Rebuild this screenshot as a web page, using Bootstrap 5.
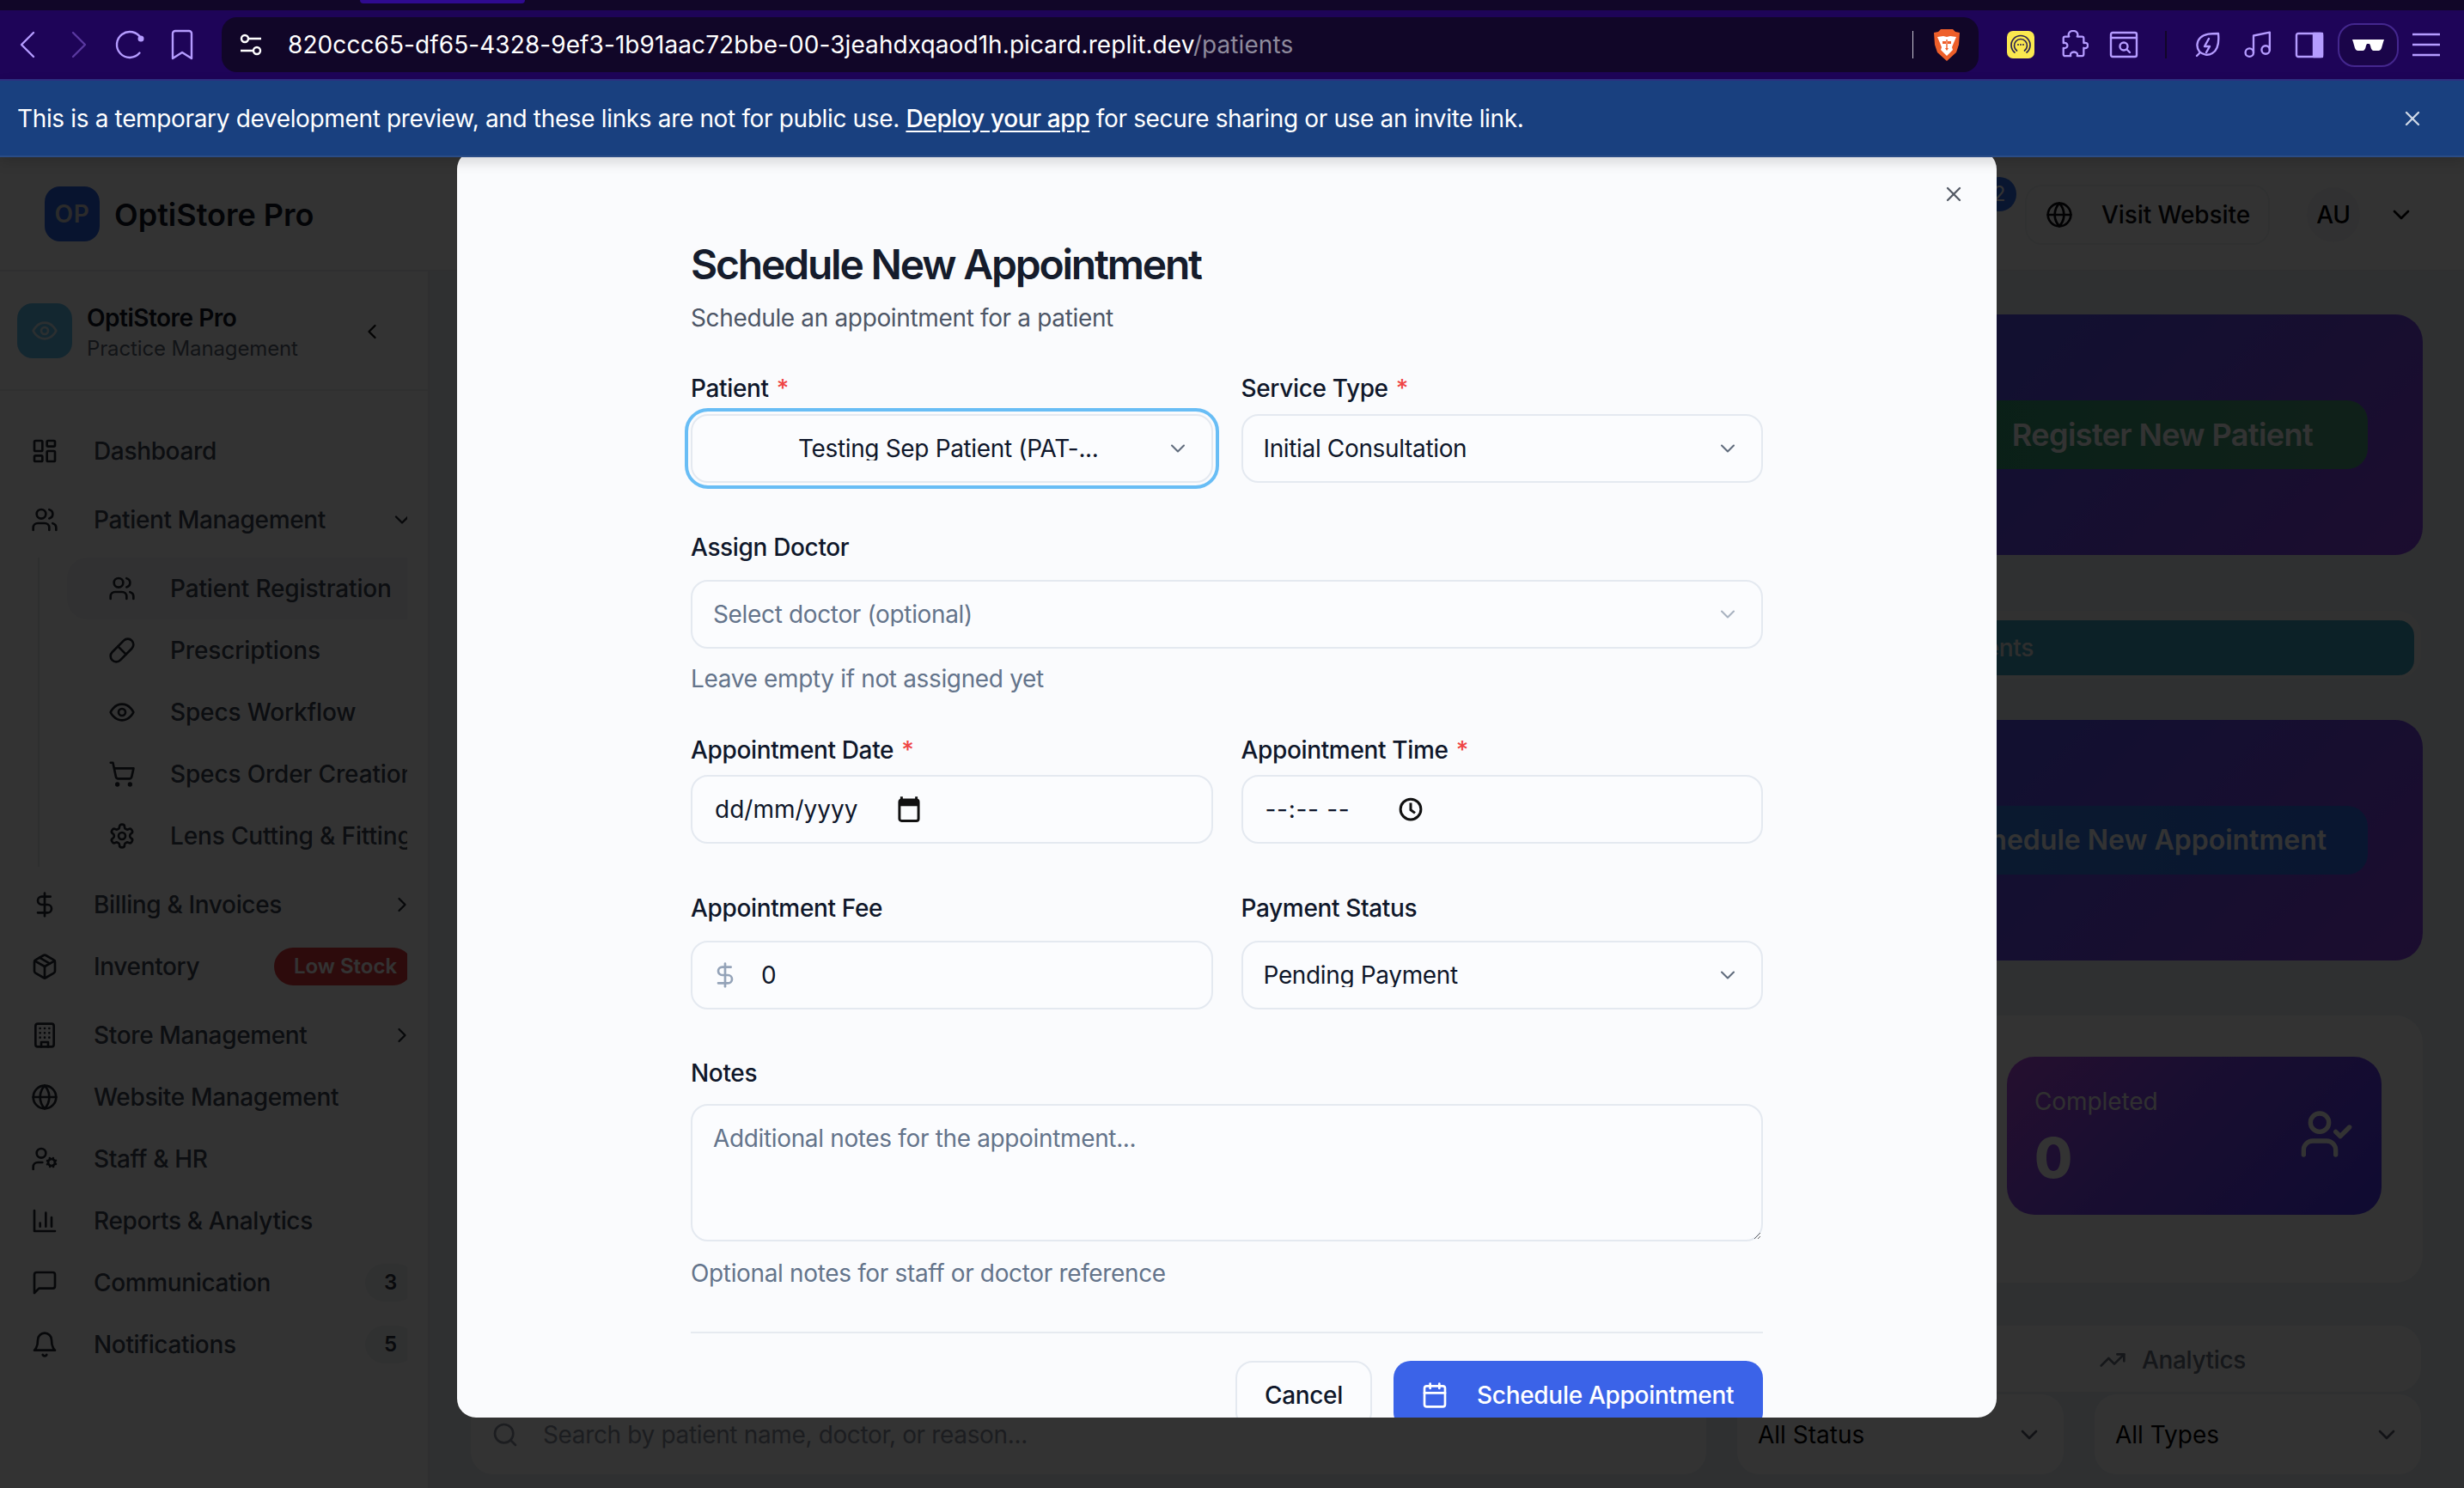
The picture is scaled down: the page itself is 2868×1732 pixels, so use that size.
<!DOCTYPE html>
<html lang="en">
<head>
<meta charset="utf-8">
<title>Schedule New Appointment</title>
<link href="https://cdn.jsdelivr.net/npm/bootstrap@5.3.0/dist/css/bootstrap.min.css" rel="stylesheet">
<style>
html,body{width:2868px;height:1732px;overflow:hidden;margin:0}
body{font-family:Inter,"Liberation Sans",sans-serif;font-size:28px;line-height:28px;letter-spacing:-.35px;color:#374151;background:#fff}
.ic{width:32px;height:32px;fill:none;stroke:currentColor;stroke-width:2;stroke-linecap:round;stroke-linejoin:round;flex:none}
.ic-28{width:28px;height:28px}
/* browser chrome */
.tabstrip{height:12px;background:#110628}
.tabnub{width:192px;height:4px;margin-left:419px;background:#2f0a8f;border-radius:0 0 6px 6px}
.toolbar{height:80px;background:#1e0458;color:#b59cff}
.tb-ic{flex:none;fill:none;stroke:#b59cff;stroke-width:2.4;stroke-linejoin:round;stroke-linecap:round}
.tb-back{width:20px;height:32px;margin-left:22px}
.tb-fwd{width:20px;height:32px;margin-left:40px;stroke:#59389f}
.tb-rel{width:34px;height:36px;margin-left:32px}
.tb-mark{width:28px;height:36px;margin-left:30px}
.urlbar{width:2045px;height:64px;margin-left:32px;background:#110628;border-radius:18px;padding-left:20px;color:#fff}
.site-ic{width:28px;height:28px;flex:none;fill:none;stroke:#fff;stroke-width:2.4}
.url-host{font-size:28px;margin-left:29px;letter-spacing:.08px;white-space:nowrap}
.url-path{color:#8e8a9c}
.url-sep{width:1px;height:32px;background:#c9c6d3;margin-left:auto}
.lion{margin:0 21px 0 23px;width:32px;height:37px;flex:none}
.ext-a{margin-left:33px;width:32px;height:32px;flex:none}
.ext-puz{width:34px;height:34px;margin-left:29px}
.ext-srch{width:34px;height:32px;margin-left:24px}
.tb-div{width:2px;height:32px;background:#110628;flex:none;margin-left:31px}
.ext-bolt{width:30px;height:30px;margin-left:32px}
.ext-music{width:33px;height:33px;margin-left:28px}
.ext-side{width:34px;height:31px;margin-left:26px}
.glass-btn{width:71px;height:51px;border:2px solid #44278e;border-radius:20px;background:#1a0549;flex:none;margin-left:16px}
.glass-ic{width:37px;height:13px}
.ext-menu{width:32px;height:30px;margin-left:16px;stroke-width:2.6;stroke-linecap:butt}
.banner{height:91px;background:#19407f;color:#fff;border-top:2px solid #2c2f80;border-bottom:2px solid #2a4c86;padding:0 46px 0 20px;position:relative;z-index:5;box-shadow:0 6px 14px rgba(0,0,0,.14)}
.banner a{color:#fff;font-weight:500;text-underline-offset:4px}
.banner .ic{color:#cfd8e6}
/* app behind the dialog */
.shell{height:1549px;position:relative;overflow:hidden}
.app-head{height:133px;border-bottom:2px solid #e8eaee;background:#fff;padding:3px 0 0 52px}
.logo-sq{width:64px;height:64px;border-radius:18px;background:#2a63e8;color:#d7d7d7;font-weight:600;font-size:28px;letter-spacing:.6px;margin-top:-3px}
.app-name{font-size:36px;line-height:40px;font-weight:600;color:#111827;margin-left:17px;letter-spacing:0}
.head-right{margin-left:auto;position:relative;padding-right:57px}
.count-dot{position:absolute;left:-50px;top:-9px;width:40px;height:40px;border-radius:50%;background:#2e6ef0;color:#fff;font-size:24px}
.visit{width:285px;height:70px;border:2px solid #f1f3f5;border-radius:20px;color:#0b0b0f;font-weight:500;background:#fff;padding-left:22px;gap:33px;letter-spacing:-.1px}
.avatar{width:62px;height:64px;border-radius:50%;background:#f5f6f8;color:#000;margin-left:43px;font-weight:500}
.head-chev{margin-left:32px;color:#000}
.app-body{height:1416px}
.side{width:500px;flex:none;border-right:2px solid #e9ebee;background:#fff;overflow:hidden}
.side-brand{height:139px;border-bottom:2px solid #eceef1;padding:0 0 0 20px}
.eye-sq{width:64px;height:64px;border-radius:18px;background:#62c0ee;color:#d8e8f0;margin-right:17px}
.brand-txt{padding-top:6px}
.brand-a{font-size:28px;line-height:36px;font-weight:600;color:#111827;letter-spacing:-.5px}
.brand-b{font-size:24px;line-height:36px;color:#5d6675;letter-spacing:-.13px}
.side-chev{margin:2px 51px 0 auto;color:#111}
.side-nav{width:474px;overflow:hidden;padding-top:34px}
.side-row{height:72px;display:flex;align-items:center;padding-left:36px;color:#3f4654;font-weight:500;white-space:nowrap}
.side-row .ic{color:#252a33}
.side-row .lbl{margin-left:41px}
.side-end{margin-left:auto;margin-right:-8px;color:#1f2430}
.gap-t{margin-top:8px}
.sub-group{margin-left:44px;border-left:2px solid #e6e8ec;padding-left:32px}
.sub-row{height:72px;display:flex;align-items:center;padding-left:48px;color:#3f4654;font-weight:500;white-space:nowrap;border-radius:24px 0 0 24px;letter-spacing:-.15px}
.sub-row .lbl{margin-left:40px}
.sub-row .ic{color:#252a33}
.sub-on{background:#f5f6f8}
.pill-red{margin-left:auto;margin-right:-6px;height:44px;width:161px;border-radius:22px;background:#e23b3f;color:#fff;font-size:24px;font-weight:600;padding-left:23px;line-height:44px;letter-spacing:0}
.pill-gray{margin-left:auto;margin-right:-10px;height:44px;width:59px;border-radius:22px;background:#f1f3f5;color:#2f3540;font-size:24px;font-weight:600;line-height:44px;padding-left:22px}
.main-area{flex:1;min-width:0;background:#e9f1f6;padding:50px 48px 0;overflow:hidden}
.hero{height:280px;border-radius:32px;background:linear-gradient(135deg,#5a5ef0 0%,#5a50f0 72%,#8a3fe8 100%);padding-right:64px}
.hero-btn{height:80px;width:1100px;border-radius:24px;color:#fff;font-size:36px;font-weight:600;line-height:80px;letter-spacing:-.6px}
.bg-green{background:linear-gradient(90deg,#0f9a6a,#4ea07e);text-align:right;padding-right:64px}
.bg-blue{background:linear-gradient(90deg,#4196dc,#2d6ef0);text-align:right;padding-right:48px;font-size:32px;letter-spacing:0}
.tab-wrap{height:79px;margin-top:65px;margin-right:2px;padding:11px 8px 4px;background:#f6f4f2;border-radius:28px}
.tab-on{height:64px;border-radius:18px;background:#3fa6c2;color:#e6e6e6;line-height:64px;text-align:right;padding-right:443px;font-weight:500}
.mt-48{margin-top:48px}
.stat-panel{height:311px;margin-top:64px;padding:48px;background:#fff;border-radius:32px}
.stat-card{width:436px;height:184px;border-radius:32px;background:linear-gradient(135deg,#b84ceb,#7d45ee 40%,#4c38f5);color:#fff;padding:34px 32px}
.stat-lbl{font-size:28px;line-height:36px;color:#eee;letter-spacing:-.1px}
.stat-num{font-size:64px;line-height:64px;font-weight:800;margin-top:16px;color:#fff;letter-spacing:0}
.stat-ic{width:64px;height:64px;margin-top:24px;color:#fff}
.tabs-row{height:77px;margin-top:50px;margin-right:2px;background:#fff;border-radius:28px;padding:3px 204px 0 0;color:#6b7280;font-weight:500;gap:18px}
.filter-row{height:93px;margin-top:3px;gap:36px;margin-right:2px}
.fbox{height:93px;background:#fff;border-radius:26px;color:#000;padding:0 24px}
.f-search{flex:1;color:#8a919e;gap:28px}
.f-sel{width:380px;justify-content:space-between;letter-spacing:0}
.f-sel .ic{color:#5b6270}
/* overlay + dialog */
.dim{position:absolute;inset:0;background:rgba(0,0,0,.8);z-index:2}
.dlg{position:absolute;left:532px;top:-8px;width:1792px;height:1475px;z-index:3;background:#fafbfd;border:0;border-radius:22px;overflow:hidden;display:block;padding:0 272px;color:#0f172a}
.dlg-x{position:absolute;right:36px;top:37px;color:#555b66;background:none;border:0;padding:0;line-height:0}
.dlg-title{font-size:48px;line-height:48px;font-weight:600;letter-spacing:-2.2px;color:#151c2c;margin:0;padding-top:109px}
.dlg-sub{font-size:28px;line-height:40px;color:#4d5666;margin:18px 0 0}
.f-label{display:block;font-weight:500;line-height:28px;color:#0f172a;margin:0 0 16px}
.f-label.wide{margin-bottom:24px}
.req{color:#ef4444;margin-left:2px}
.blk-patient{margin-top:48px}
.gut{--bs-gutter-x:33px;--bs-gutter-y:0}
.f-ctl{height:80px;border:2px solid #e4e9f0;border-radius:20px;background-color:#fbfcfe;font-size:28px;line-height:28px;letter-spacing:-.35px;color:#0f172a;padding:0 60px 0 24px;box-shadow:none}
select.f-ctl{background-image:url("data:image/svg+xml,%3csvg xmlns='http://www.w3.org/2000/svg' viewBox='0 0 24 24' fill='none' stroke='%235f6b7c' stroke-width='1.8' stroke-linecap='round' stroke-linejoin='round'%3e%3cpath d='m6 9 6 6 6-6'/%3e%3c/svg%3e");background-size:28px 28px;background-position:right 25px center;background-repeat:no-repeat}
.f-focus{outline:4px solid #68bdf5;outline-offset:3px;padding-left:123px}
.f-ph{color:#64748b}
.ph-chev{background-image:url("data:image/svg+xml,%3csvg xmlns='http://www.w3.org/2000/svg' viewBox='0 0 24 24' fill='none' stroke='%23a8b2c0' stroke-width='1.8' stroke-linecap='round' stroke-linejoin='round'%3e%3cpath d='m6 9 6 6 6-6'/%3e%3c/svg%3e")!important}
.f-help{color:#64748b;line-height:28px;margin:21px 0 0}
.blk-doc{margin-top:61px}
.blk-date{margin-top:55px}
.blk-fee{margin-top:61px}
.blk-notes{margin-top:60px}
.blk-notes .f-label{margin-bottom:22px}
.blk-notes .f-help{margin-top:23px}
.date-lbl{margin-bottom:15px}
.fake-ctl{display:flex;align-items:center;padding-left:26px;color:#0f172a}
.date-txt{width:199px;white-space:nowrap;letter-spacing:0}
.time-txt{width:142px;white-space:nowrap;letter-spacing:.7px}
.date-ic{width:30px;height:32px;margin-left:12px;color:#111}
.fee-sign{color:#94a3b8;width:32px;margin-left:-4px;flex:none}
.fee-val{margin-left:26px;border:0;background:none;padding:0;color:#0f172a;width:300px;font-size:28px;outline:0}
.f-area{height:160px;padding:24px 24px;resize:vertical;display:block;width:100%}
.f-area::placeholder{color:#64748b;opacity:1}
.dlg-foot{margin-top:54px;border-top:2px solid #e6eaf0;padding:32px 0 0;justify-content:flex-end;gap:25px}
.btn-c{height:80px;border:2px solid #e4e9f0;border-radius:20px;background:#fbfcfe;color:#0f172a;font-size:28px;font-weight:500;width:159px;padding:0;line-height:28px;letter-spacing:-.35px}
.btn-p{height:80px;width:430px;border:0;border-radius:20px;background:#3b63e8;color:#fff;font-size:28px;font-weight:500;line-height:28px;letter-spacing:-.3px;padding:0 0 0 32px;gap:33px;justify-content:flex-start}
.btn-p:hover,.btn-c:hover{background-color:inherit}
</style>
</head>
<body>
<svg width="0" height="0" class="position-absolute" aria-hidden="true">
<defs>
<symbol id="i-dash" viewBox="0 0 24 24"><rect x="3" y="3" width="7" height="9" rx="1"/><rect x="14" y="3" width="7" height="5" rx="1"/><rect x="14" y="12" width="7" height="9" rx="1"/><rect x="3" y="16" width="7" height="5" rx="1"/></symbol>
<symbol id="i-users" viewBox="0 0 24 24"><path d="M16 21v-2a4 4 0 0 0-4-4H6a4 4 0 0 0-4 4v2"/><circle cx="9" cy="7" r="4"/><path d="M22 21v-2a4 4 0 0 0-3-3.87"/><path d="M16 3.13a4 4 0 0 1 0 7.75"/></symbol>
<symbol id="i-pill" viewBox="0 0 24 24"><path d="m10.5 20.5 10-10a4.95 4.95 0 1 0-7-7l-10 10a4.95 4.95 0 1 0 7 7Z"/><path d="m8.5 8.5 7 7"/></symbol>
<symbol id="i-eye" viewBox="0 0 24 24"><path d="M2 12s3-7 10-7 10 7 10 7-3 7-10 7-10-7-10-7Z"/><circle cx="12" cy="12" r="3"/></symbol>
<symbol id="i-cart" viewBox="0 0 24 24"><circle cx="8" cy="21" r="1"/><circle cx="19" cy="21" r="1"/><path d="M2.05 2.05h2l2.66 12.42a2 2 0 0 0 2 1.58h9.78a2 2 0 0 0 1.95-1.57l1.65-7.43H5.12"/></symbol>
<symbol id="i-gear" viewBox="0 0 24 24"><path d="M12.22 2h-.44a2 2 0 0 0-2 2v.18a2 2 0 0 1-1 1.73l-.43.25a2 2 0 0 1-2 0l-.15-.08a2 2 0 0 0-2.73.73l-.22.38a2 2 0 0 0 .73 2.73l.15.1a2 2 0 0 1 1 1.72v.51a2 2 0 0 1-1 1.74l-.15.09a2 2 0 0 0-.73 2.73l.22.38a2 2 0 0 0 2.73.73l.15-.08a2 2 0 0 1 2 0l.43.25a2 2 0 0 1 1 1.73V20a2 2 0 0 0 2 2h.44a2 2 0 0 0 2-2v-.18a2 2 0 0 1 1-1.73l.43-.25a2 2 0 0 1 2 0l.15.08a2 2 0 0 0 2.73-.73l.22-.39a2 2 0 0 0-.73-2.73l-.15-.08a2 2 0 0 1-1-1.74v-.5a2 2 0 0 1 1-1.74l.15-.09a2 2 0 0 0 .73-2.73l-.22-.38a2 2 0 0 0-2.73-.73l-.15.08a2 2 0 0 1-2 0l-.43-.25a2 2 0 0 1-1-1.73V4a2 2 0 0 0-2-2z"/><circle cx="12" cy="12" r="3"/></symbol>
<symbol id="i-dollar" viewBox="0 0 24 24"><path d="M12 2v20"/><path d="M17 5H9.5a3.5 3.5 0 0 0 0 7h5a3.5 3.5 0 0 1 0 7H6"/></symbol>
<symbol id="i-box" viewBox="0 0 24 24"><path d="m7.5 4.27 9 5.15"/><path d="M21 8a2 2 0 0 0-1-1.73l-7-4a2 2 0 0 0-2 0l-7 4A2 2 0 0 0 3 8v8a2 2 0 0 0 1 1.73l7 4a2 2 0 0 0 2 0l7-4A2 2 0 0 0 21 16Z"/><path d="m3.3 7 8.7 5 8.7-5"/><path d="M12 22V12"/></symbol>
<symbol id="i-building" viewBox="0 0 24 24"><rect x="4" y="2" width="16" height="20" rx="2"/><path d="M9 22v-4h6v4"/><path d="M8 6h.01M16 6h.01M12 6h.01M12 10h.01M12 14h.01M16 10h.01M16 14h.01M8 10h.01M8 14h.01"/></symbol>
<symbol id="i-globe" viewBox="0 0 24 24"><circle cx="12" cy="12" r="10"/><path d="M12 2a14.5 14.5 0 0 0 0 20 14.5 14.5 0 0 0 0-20"/><path d="M2 12h20"/></symbol>
<symbol id="i-usercog" viewBox="0 0 24 24"><circle cx="18" cy="15" r="3"/><circle cx="9" cy="7" r="4"/><path d="M10 15H6a4 4 0 0 0-4 4v2"/><path d="m21.7 16.4-.9-.3M15.2 13.9l-.9-.3M16.6 18.7l.3-.9M19.1 12.2l.3-.9M19.6 18.7l-.4-1M16.8 12.3l-.4-1M14.3 16.6l1-.4M20.7 13.8l1-.4"/></symbol>
<symbol id="i-chart" viewBox="0 0 24 24"><path d="M3 3v18h18"/><path d="M18 17V9"/><path d="M13 17V5"/><path d="M8 17v-3"/></symbol>
<symbol id="i-msg" viewBox="0 0 24 24"><path d="M21 15a2 2 0 0 1-2 2H7l-4 4V5a2 2 0 0 1 2-2h14a2 2 0 0 1 2 2z"/></symbol>
<symbol id="i-bell" viewBox="0 0 24 24"><path d="M6 8a6 6 0 0 1 12 0c0 7 3 9 3 9H3s3-2 3-9"/><path d="M10.3 21a1.94 1.94 0 0 0 3.4 0"/></symbol>
<symbol id="i-left" viewBox="0 0 24 24"><path d="m15 18-6-6 6-6"/></symbol>
<symbol id="i-right" viewBox="0 0 24 24"><path d="m9 18 6-6-6-6"/></symbol>
<symbol id="i-down" viewBox="0 0 24 24"><path d="m6 9 6 6 6-6"/></symbol>
<symbol id="i-x" viewBox="0 0 24 24"><path d="M18 6 6 18"/><path d="m6 6 12 12"/></symbol>
<symbol id="i-cal" viewBox="0 0 24 24"><path d="M8 2v4"/><path d="M16 2v4"/><rect x="3" y="4" width="18" height="18" rx="2"/><path d="M3 10h18"/></symbol>
<symbol id="i-ucheck" viewBox="0 0 24 24"><path d="M16 21v-2a4 4 0 0 0-4-4H6a4 4 0 0 0-4 4v2"/><circle cx="9" cy="7" r="4"/><path d="m16 11 2 2 4-4"/></symbol>
<symbol id="i-trend" viewBox="0 0 24 24"><path d="m22 7-8.5 8.5-5-5L2 17"/><path d="M16 7h6v6"/></symbol>
<symbol id="i-search" viewBox="0 0 24 24"><circle cx="11" cy="11" r="8"/><path d="m21 21-4.3-4.3"/></symbol>
</defs>
</svg>

<div class="tabstrip"><div class="tabnub"></div></div>
<div class="toolbar d-flex align-items-center">
  <svg class="tb-ic tb-back" viewBox="0 0 20 32"><path d="M17 2 3 16l14 14"/></svg>
  <svg class="tb-ic tb-fwd" viewBox="0 0 20 32"><path d="m3 2 14 14L3 30"/></svg>
  <svg class="tb-ic tb-rel" viewBox="0 0 34 36"><path d="M30 10.500A15 15 0 1 0 28.500 27.600"/><circle cx="30" cy="11" r="3.500" fill="#b59cff" stroke="none"/></svg>
  <svg class="tb-ic tb-mark" viewBox="0 0 28 36"><path d="M3 5a3 3 0 0 1 3-3h16a3 3 0 0 1 3 3v29l-11-7-11 7z"/></svg>
  <div class="urlbar d-flex align-items-center">
    <svg class="site-ic" viewBox="0 0 28 28"><circle cx="7" cy="7" r="4"/><path d="M11 7h15M2 21h15"/><circle cx="21" cy="21" r="4"/></svg>
    <span class="url-host">820ccc65-df65-4328-9ef3-1b91aac72bbe-00-3jeahdxqaod1h.picard.replit.dev<span class="url-path">/patients</span></span>
    <span class="url-sep"></span>
    <svg class="lion" viewBox="0 0 32 37"><path d="M9 0h14l3 3 5 1-1 14-3 9-11 10-11-10-3-9L1 4l5-1z" fill="#ee5f2a"/><path d="M5 9l7-1 4 1 4-1 7 1-3 7-2 5 1 3-7 7-7-7 1-3-2-5z" fill="#fff"/><path d="M11 14h4v3h-4zM17 14h4v3h-4zM14 22h4l-2 3zM15.300 12h1.400v12h-1.400z" fill="#ee5f2a"/></svg>
  </div>
  <svg class="ext-a" viewBox="0 0 32 32"><rect width="32" height="32" rx="7" fill="#fbe84f"/><path d="M9 25a11 11 0 1 1 14 0M11.500 23a7.500 7.500 0 1 1 9 0" fill="none" stroke="#2b2350" stroke-width="1.700" stroke-linecap="round"/><circle cx="13" cy="16" r="1" fill="#2b2350"/><circle cx="16" cy="16" r="1" fill="#2b2350"/><circle cx="19" cy="16" r="1" fill="#2b2350"/></svg>
  <svg class="tb-ic ext-puz" viewBox="0 0 36 36"><path d="M12 8c-2-4 1-7 5-7s7 3 5 7h6a2 2 0 0 1 2 2v6c4-1 5 1 5 3s-1 4-5 3v8a2 2 0 0 1-2 2h-6c1-3-1-5-4-5s-5 2-4 5H7a2 2 0 0 1-2-2v-8c3 1 5-1 5-3s-2-4-5-3v-6a2 2 0 0 1 2-2z"/></svg>
  <svg class="tb-ic ext-srch" viewBox="0 0 34 32"><rect x="2" y="2" width="30" height="28" rx="2"/><path d="M2 8h30"/><circle cx="17" cy="18" r="4.500"/><path d="m20.500 21.500 3.500 3.500"/></svg>
  <span class="tb-div"></span>
  <svg class="tb-ic ext-bolt" viewBox="0 0 30 30"><path d="M28 2c1 10 0 19-7 23-5 3-11 2-15-2-4-5-3-12 1-16 5-5 13-5 21-5z"/><path d="m6 25-3 3"/><path d="m17 8-5 9h6l-4 7"/></svg>
  <svg class="tb-ic ext-music" viewBox="2 2 21 21"><path d="M9 18V5.500l12-2.500v13" stroke-width="1.500"/><circle cx="6" cy="18" r="3" stroke-width="1.500"/><circle cx="18" cy="16" r="3" stroke-width="1.500"/></svg>
  <svg class="tb-ic ext-side" viewBox="0 0 34 31"><rect x="2" y="2" width="30" height="27" rx="2"/><rect x="22" y="2" width="10" height="27" fill="#b59cff"/></svg>
  <span class="glass-btn d-flex align-items-center justify-content-center"><svg class="glass-ic" viewBox="0 0 37 13"><path d="M0 0h37l-1 3-2 7q-1 3-3 3h-6q-3 0-4-6l-1-2h-3l-1 2q-1 6-4 6H6q-2 0-3-3L1 3z" fill="#fff"/></svg></span>
  <svg class="tb-ic ext-menu" viewBox="0 0 32 30"><path d="M0 3h32M0 15h32M0 27h32"/></svg>
</div>
<div class="banner d-flex align-items-center">
  <span>This is a temporary development preview, and these links are not for public use. <a href="#">Deploy your app</a> for secure sharing or use an invite link.</span>
  <svg class="ic ic-28 ms-auto" viewBox="0 0 24 24"><use href="#i-x"/></svg>
</div>

<div class="shell">
  <header class="app-head d-flex align-items-center">
    <span class="logo-sq d-flex align-items-center justify-content-center">OP</span>
    <span class="app-name">OptiStore Pro</span>
    <div class="head-right d-flex align-items-center">
      <span class="count-dot d-flex align-items-center justify-content-center">2</span>
      <span class="visit d-flex align-items-center"><svg class="ic" viewBox="0 0 24 24"><use href="#i-globe"/></svg>Visit Website</span>
      <span class="avatar d-flex align-items-center justify-content-center">AU</span>
      <svg class="ic head-chev" viewBox="0 0 24 24"><use href="#i-down"/></svg>
    </div>
  </header>
  <div class="app-body d-flex">
    <aside class="side">
      <div class="side-brand d-flex align-items-center">
        <span class="eye-sq d-flex align-items-center justify-content-center"><svg class="ic" viewBox="0 0 24 24"><use href="#i-eye"/></svg></span>
        <div class="brand-txt"><div class="brand-a">OptiStore Pro</div><div class="brand-b">Practice Management</div></div>
        <svg class="ic ic-28 side-chev" viewBox="0 0 24 24"><use href="#i-left"/></svg>
      </div>
      <nav class="side-nav">
        <div class="side-row"><svg class="ic" viewBox="0 0 24 24"><use href="#i-dash"/></svg><span class="lbl">Dashboard</span></div>
        <div class="side-row gap-t"><svg class="ic" viewBox="0 0 24 24"><use href="#i-users"/></svg><span class="lbl">Patient Management</span><svg class="ic ic-28 side-end" viewBox="0 0 24 24"><use href="#i-down"/></svg></div>
        <div class="sub-group gap-t">
          <div class="sub-row sub-on"><svg class="ic" viewBox="0 0 24 24"><use href="#i-users"/></svg><span class="lbl">Patient Registration</span></div>
          <div class="sub-row"><svg class="ic" viewBox="0 0 24 24"><use href="#i-pill"/></svg><span class="lbl">Prescriptions</span></div>
          <div class="sub-row"><svg class="ic" viewBox="0 0 24 24"><use href="#i-eye"/></svg><span class="lbl">Specs Workflow</span></div>
          <div class="sub-row"><svg class="ic" viewBox="0 0 24 24"><use href="#i-cart"/></svg><span class="lbl">Specs Order Creation</span></div>
          <div class="sub-row"><svg class="ic" viewBox="0 0 24 24"><use href="#i-gear"/></svg><span class="lbl">Lens Cutting &amp; Fitting</span></div>
        </div>
        <div class="side-row gap-t"><svg class="ic" viewBox="0 0 24 24"><use href="#i-dollar"/></svg><span class="lbl">Billing &amp; Invoices</span><svg class="ic ic-28 side-end" viewBox="0 0 24 24"><use href="#i-right"/></svg></div>
        <div class="side-row"><svg class="ic" viewBox="0 0 24 24"><use href="#i-box"/></svg><span class="lbl">Inventory</span><span class="pill-red">Low Stock</span></div>
        <div class="side-row gap-t"><svg class="ic" viewBox="0 0 24 24"><use href="#i-building"/></svg><span class="lbl">Store Management</span><svg class="ic ic-28 side-end" viewBox="0 0 24 24"><use href="#i-right"/></svg></div>
        <div class="side-row"><svg class="ic" viewBox="0 0 24 24"><use href="#i-globe"/></svg><span class="lbl">Website Management</span></div>
        <div class="side-row"><svg class="ic" viewBox="0 0 24 24"><use href="#i-usercog"/></svg><span class="lbl">Staff &amp; HR</span></div>
        <div class="side-row"><svg class="ic" viewBox="0 0 24 24"><use href="#i-chart"/></svg><span class="lbl">Reports &amp; Analytics</span></div>
        <div class="side-row"><svg class="ic" viewBox="0 0 24 24"><use href="#i-msg"/></svg><span class="lbl">Communication</span><span class="pill-gray">3</span></div>
        <div class="side-row"><svg class="ic" viewBox="0 0 24 24"><use href="#i-bell"/></svg><span class="lbl">Notifications</span><span class="pill-gray">5</span></div>
      </nav>
    </aside>
    <main class="main-area">
      <section class="hero d-flex align-items-center justify-content-end"><div class="hero-btn bg-green">Register New Patient</div></section>
      <div class="tab-wrap"><div class="tab-on">Appointments</div></div>
      <section class="hero mt-48 d-flex align-items-center justify-content-end"><div class="hero-btn bg-blue">Schedule New Appointment</div></section>
      <section class="stat-panel d-flex justify-content-end">
        <div class="stat-card d-flex justify-content-between">
          <div><div class="stat-lbl">Completed</div><div class="stat-num">0</div></div>
          <svg class="ic stat-ic" viewBox="0 0 24 24"><use href="#i-ucheck"/></svg>
        </div>
      </section>
      <div class="tabs-row d-flex align-items-center justify-content-end"><svg class="ic" viewBox="0 0 24 24"><use href="#i-trend"/></svg>Analytics</div>
      <div class="filter-row d-flex">
        <div class="fbox f-search d-flex align-items-center"><svg class="ic" viewBox="0 0 24 24"><use href="#i-search"/></svg>Search by patient name, doctor, or reason...</div>
        <div class="fbox f-sel d-flex align-items-center">All Status<svg class="ic" viewBox="0 0 24 24"><use href="#i-down"/></svg></div>
        <div class="fbox f-sel d-flex align-items-center">All Types<svg class="ic" viewBox="0 0 24 24"><use href="#i-down"/></svg></div>
      </div>
    </main>
  </div>

  <div class="dim"></div>

  <div class="dlg modal-content" role="dialog" aria-label="Schedule New Appointment">
    <button class="dlg-x" type="button" aria-label="Close"><svg class="ic ic-28" viewBox="0 0 24 24"><use href="#i-x"/></svg></button>
    <h2 class="dlg-title">Schedule New Appointment</h2>
    <p class="dlg-sub">Schedule an appointment for a patient</p>
    <form>
      <div class="row gut blk-patient">
        <div class="col-6">
          <label class="f-label">Patient <span class="req">*</span></label>
          <select class="form-select f-ctl f-focus"><option>Testing Sep Patient (PAT-...</option></select>
        </div>
        <div class="col-6">
          <label class="f-label">Service Type <span class="req">*</span></label>
          <select class="form-select f-ctl"><option>Initial Consultation</option></select>
        </div>
      </div>
      <div class="blk-doc">
        <label class="f-label wide">Assign Doctor</label>
        <select class="form-select f-ctl f-ph ph-chev"><option>Select doctor (optional)</option></select>
        <p class="f-help">Leave empty if not assigned yet</p>
      </div>
      <div class="row gut blk-date">
        <div class="col-6">
          <label class="f-label date-lbl">Appointment Date <span class="req">*</span></label>
          <div class="form-control f-ctl fake-ctl"><span class="date-txt">dd/mm/yyyy</span><svg class="date-ic" viewBox="0 0 24 26"><path d="M5 1v4M19 1v4" stroke="#111" stroke-width="2.4" fill="none"/><rect x="3" y="4" width="18" height="20" rx="2" fill="none" stroke="#111" stroke-width="2.4"/><rect x="3" y="4" width="18" height="6" fill="#111"/></svg></div>
        </div>
        <div class="col-6">
          <label class="f-label date-lbl">Appointment Time <span class="req">*</span></label>
          <div class="form-control f-ctl fake-ctl"><span class="time-txt">--:-- --</span><svg class="date-ic" viewBox="0 0 24 24"><circle cx="12" cy="12" r="9.5" fill="none" stroke="#111" stroke-width="2.4"/><path d="M12 6v6.5l4 3" fill="none" stroke="#111" stroke-width="2.4"/></svg></div>
        </div>
      </div>
      <div class="row gut blk-fee">
        <div class="col-6">
          <label class="f-label wide">Appointment Fee</label>
          <div class="form-control f-ctl fake-ctl"><svg class="ic fee-sign" viewBox="0 0 24 24"><use href="#i-dollar"/></svg><input class="fee-val" type="text" value="0" aria-label="Appointment Fee"></div>
        </div>
        <div class="col-6">
          <label class="f-label wide">Payment Status</label>
          <select class="form-select f-ctl"><option>Pending Payment</option></select>
        </div>
      </div>
      <div class="blk-notes">
        <label class="f-label">Notes</label>
        <textarea class="form-control f-ctl f-area" placeholder="Additional notes for the appointment..."></textarea>
        <p class="f-help">Optional notes for staff or doctor reference</p>
      </div>
      <div class="dlg-foot d-flex">
        <button class="btn btn-c" type="button">Cancel</button>
        <button class="btn btn-p d-flex align-items-center" type="button"><svg class="ic" viewBox="0 0 24 24"><use href="#i-cal"/></svg>Schedule Appointment</button>
      </div>
    </form>
  </div>
</div>
<script src="https://cdn.jsdelivr.net/npm/bootstrap@5.3.0/dist/js/bootstrap.bundle.min.js"></script>
</body>
</html>
